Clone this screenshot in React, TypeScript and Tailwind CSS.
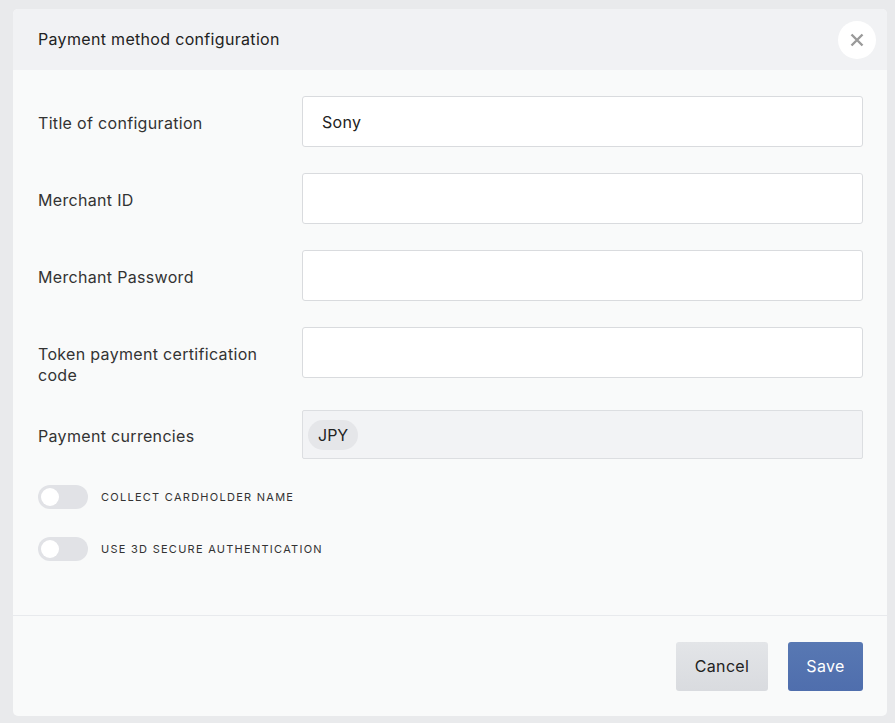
import { useState } from "react";

const fields = [
  { label: "Title of configuration", value: "Sony" },
  { label: "Merchant ID", value: "" },
  { label: "Merchant Password", value: "" },
  { label: "Token payment certification code", value: "" },
];

function Toggle({ label }: { label: string }) {
  const [on, setOn] = useState(false);
  return (
    <label className="flex items-center gap-[13px] cursor-pointer">
      <button
        type="button"
        onClick={() => setOn(!on)}
        className={`relative w-[50px] h-[24px] rounded-full ${on ? "bg-[#5573b0]" : "bg-[#e1e2e6]"}`}
      >
        <span
          className={`absolute top-[3px] w-[18px] h-[18px] rounded-full bg-white ${on ? "left-[29px]" : "left-[3px]"}`}
        />
      </button>
      <span className="text-[11px] tracking-[0.115em] uppercase text-[#333]">{label}</span>
    </label>
  );
}

export default function App() {
  return (
    <div
      className="min-h-screen bg-[#e9eaec] pt-[9px] pl-[13px] pr-[8px] pb-[7px] text-[#2f3033] tracking-[0.02em]"
      style={{ fontFamily: "Inter, 'Noto Sans', sans-serif" }}
    >
      <div className="w-[874px] h-[707px] rounded-[5px] bg-[#f9fafa] flex flex-col overflow-hidden">
        <div className="h-[61px] bg-[#f1f2f4] flex items-center justify-between pl-[25px] pr-[11px] shrink-0">
          <h2 className="text-[16px] text-[#222] -mt-[2px]">Payment method configuration</h2>
          <button className="w-[38px] h-[38px] rounded-full bg-white flex items-center justify-center">
            <svg width="14" height="14" viewBox="0 0 14 14">
              <path d="M1.5 1.5 L12.5 12.5 M12.5 1.5 L1.5 12.5" stroke="#9a9a9a" strokeWidth="2.4" />
            </svg>
          </button>
        </div>

        <div className="flex-1 pt-[26px] pl-[25px] pr-[24px] flex flex-col">
          <div className="flex flex-col gap-[26px]">
            {fields.map((f) => (
              <div key={f.label} className="flex items-start h-[51px]">
                <div className="w-[240px] mr-[24px] pt-[17px] text-[16px] leading-[21px] text-[#333]">{f.label}</div>
                <input
                  defaultValue={f.value}
                  className="flex-1 h-[51px] bg-white border border-[#d9dbde] rounded-[3px] px-[19px] text-[16px] text-[#222] outline-none"
                />
              </div>
            ))}
            <div className="flex items-start mt-[6px]">
              <div className="w-[240px] mr-[24px] pt-[16px] text-[16px] leading-[21px] text-[#333]">Payment currencies</div>
              <div className="flex-1 h-[49px] bg-[#f2f3f5] border border-[#dcdee1] rounded-[2px] flex items-center px-[5px]">
                <span className="h-[30px] px-[10px] rounded-full bg-[#e5e6e9] flex items-center text-[16px] tracking-normal text-[#222]">
                  JPY
                </span>
              </div>
            </div>
          </div>
          <div className="flex flex-col gap-[28px] mt-[26px]">
            <Toggle label="Collect cardholder name" />
            <Toggle label="Use 3D secure authentication" />
          </div>
        </div>

        <div className="h-[101px] border-t border-[#e8eaed] flex items-center justify-end gap-[20px] pr-[24px] shrink-0">
          <button className="w-[92px] h-[49px] rounded-[3px] bg-gradient-to-b from-[#e3e5e8] to-[#d9dbdf] text-[16px] text-[#222]">
            Cancel
          </button>
          <button className="w-[75px] h-[49px] rounded-[3px] bg-gradient-to-b from-[#5878b3] to-[#4f6ead] text-[16px] text-white">
            Save
          </button>
        </div>
      </div>
    </div>
  );
}
